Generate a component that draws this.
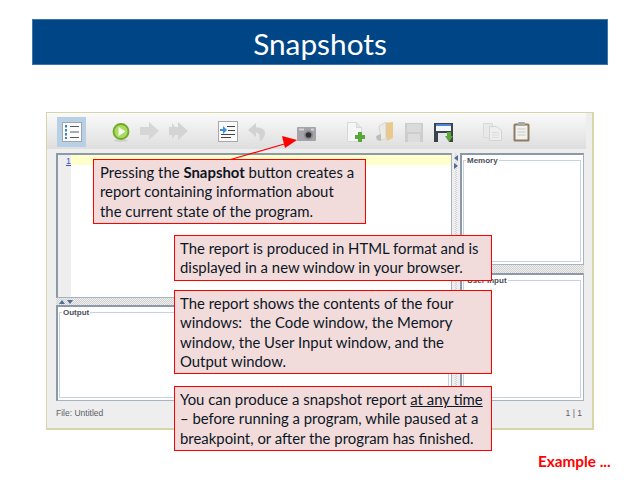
<div class="slide">
  <h1 class="title">Snapshots</h1>

  <div class="window">
    <div class="toolbar">
      <div class="tool active">
        <svg width="22" height="22" viewBox="0 0 22 22">
          <rect x="1.500" y="1.500" width="19" height="19" fill="#fbfbfb" stroke="#a2a6ac" />
          <path d="M5 4v14" stroke="#3b7fd4" stroke-width="2" stroke-dasharray="2.500 1.500" />
          <path d="M9 5.500h9M9 11h9M9 16.500h9" stroke="#5a5a5a" stroke-width="1.200" />
        </svg>
      </div>
      <svg class="play" width="18" height="19" viewBox="0 0 18 19">
        <ellipse cx="9" cy="17.500" rx="7" ry="1.500" fill="#d0d0d0" />
        <circle cx="9" cy="8.500" r="7.500" fill="#a9da62" stroke="#6fa926" stroke-width="1.800" />
        <path d="M6.500 4l7 4.500-7 4.500z" fill="#f6fbec" />
      </svg>
      <svg class="fwd" width="19" height="18" viewBox="0 0 19 18">
        <path d="M0 5h9V0l10 9-10 9v-5H0z" fill="#d6d6d6" />
      </svg>
      <svg class="fwd" width="19" height="18" viewBox="0 0 19 18">
        <path d="M0 5h3V1l6 8-6 8v-4H0zM9 0l10 9-10 9V13H6l3-4-3-4h3z" fill="#d4d4d4" />
      </svg>
      <svg class="indent" width="20" height="21" viewBox="0 0 20 21">
        <rect x=".5" y=".5" width="19" height="20" fill="#fafafa" stroke="#a8a8a8" />
        <path d="M9 5.500h8M10 9.500h7M3 13.500h14M3 16.500h10" stroke="#444" stroke-width="1.200" />
        <path d="M2 8h3V5l4 4-4 4v-3H2z" fill="#3f8fe0" />
      </svg>
      <svg class="undo" width="17" height="19" viewBox="0 0 17 19">
        <path d="M8 0L0 7l8 7V9.500c3 0 4.500 3 3.500 9.500 4-3 5.500-6 5.500-9 0-4-4-5.500-9-5.500z" fill="#d2d2d2" />
      </svg>
      <svg class="camera" width="19" height="14" viewBox="0 0 19 14">
        <rect width="19" height="14" rx="1" fill="#a4a4a8" />
        <rect x="2" y="1.500" width="5" height="2" fill="#d4d4d8" />
        <rect x="14" y="1.500" width="3" height="2" fill="#d4d4d8" />
        <circle cx="11.500" cy="8" r="4.500" fill="#8a8a8e" />
        <circle cx="11.500" cy="8" r="2.800" fill="#2f2f31" />
      </svg>
      <svg class="newfile" width="18" height="20" viewBox="0 0 18 20">
        <path d="M.5.500h9l5 5v14H.5z" fill="#f5f5f5" stroke="#d8d8d8" />
        <path d="M9.500.5v5h5" fill="#e4e4e4" stroke="#d8d8d8" />
        <path d="M11 10h4v3h3v4h-3v3h-4v-3H8v-4h3z" fill="#58a838" />
      </svg>
      <svg class="open" width="17" height="20" viewBox="0 0 17 20">
        <path d="M8 1l9-1v16l-6 3z" fill="#e9c98d" />
        <path d="M3 4l7-4v17l-5 1z" fill="#ecebe6" stroke="#c8c8c4" stroke-width=".6" />
        <path d="M0 14l5-2v7l-4-1z" fill="#bcbcbc" />
      </svg>
      <svg class="save-off" width="18" height="19" viewBox="0 0 18 19">
        <rect width="18" height="19" fill="#cdcdcd" />
        <rect x="2" y="1" width="14" height="8" fill="#dadada" />
        <rect x="3" y="11" width="12" height="8" fill="#dcdcdc" />
      </svg>
      <svg class="save" width="19" height="19" viewBox="0 0 19 19">
        <rect width="19" height="19" fill="#3c424a" />
        <rect x="2" y="1" width="15" height="7" fill="#f2f5fa" />
        <rect x="2" y="1" width="15" height="2" fill="#4a86d0" />
        <rect x="4" y="10" width="11" height="9" fill="#e2e5ea" />
        <path d="M13 9h4v4h2l-4 6-4-6h2z" fill="#5fa53a" />
      </svg>
      <svg class="copy" width="19" height="18" viewBox="0 0 19 18">
        <path d="M.5.500h9v14h-9z" fill="#e9e9e9" stroke="#dadada" />
        <path d="M6.500 3.500h7l5 4v10h-12z" fill="#eeeeee" stroke="#d4d4d4" />
        <path d="M9 9.500h7M9 12h7M9 14.500h7" stroke="#dcdcdc" />
      </svg>
      <svg class="paste" width="17" height="20" viewBox="0 0 17 20">
        <rect x=".5" y="1.500" width="16" height="18" rx="1.500" fill="#8f7a62" />
        <rect x="2.500" y="3.500" width="12" height="14" fill="#f1f1ee" />
        <rect x="5" y="0" width="7" height="4" rx="1" fill="#a8a8a4" />
        <path d="M4.500 7h8M4.500 10h8M4.500 13h8" stroke="#c9c9c5" />
      </svg>
    </div>

    <div class="workspace">
      <div class="left">
        <div class="code">
          <div class="gutter"><u>1</u></div>
          <div class="editor"><div class="current"></div></div>
        </div>
        <div class="split-h">
          <svg width="14" height="5" viewBox="0 0 14 5">
            <path d="M0 5l3-4 3 4zM8 1h6l-3 4z" fill="#4f6f94" />
          </svg>
        </div>
        <div class="pane output">
          <fieldset><legend>Output</legend></fieldset>
        </div>
      </div>
      <div class="split-v">
        <svg width="5" height="14" viewBox="0 0 5 14">
          <path d="M5 0v6L1 3zM1 8v6l4-3z" fill="#4f6f94" />
        </svg>
      </div>
      <div class="right">
        <div class="pane memory">
          <fieldset><legend>Memory</legend></fieldset>
        </div>
        <div class="split-h tall"></div>
        <div class="pane input">
          <fieldset><legend>User Input</legend></fieldset>
        </div>
      </div>
    </div>

    <div class="status">
      <span>File: Untitled</span>
      <span>1 | 1</span>
    </div>
  </div>

  <svg class="arrow" width="640" height="480" viewBox="0 0 640 480">
    <path d="M229 160L286 143.500" stroke="#f00" stroke-width="1.200" />
    <path d="M297 140L282 136l3 12z" fill="#f00" />
  </svg>

  <div class="note n1">
    Pressing the <b>Snapshot</b> button creates a<br />
    report containing information about<br />
    the current state of the program.
  </div>
  <div class="note n2">
    The report is produced in HTML format and is<br />
    displayed in a new window in your browser.
  </div>
  <div class="note n3">
    The report shows the contents of the four<br />
    windows:&nbsp; the Code window, the Memory<br />
    window, the User Input window, and the<br />
    Output window.
  </div>
  <div class="note n4">
    You can produce a snapshot report <u>at any time</u><br />
    – before running a program, while paused at a<br />
    breakpoint, or after the program has finished.
  </div>

  <div class="example">Example ...</div>
</div>

<style>
  :global(body) {
    margin: 0;
    background: #fff;
  }

  .slide {
    position: relative;
    width: 640px;
    height: 480px;
    overflow: hidden;
    padding-top: 19px;
    box-sizing: border-box;
    font-family: Lato, "Liberation Sans", sans-serif;
  }

  .title {
    margin: 0 32px;
    height: 46px;
    box-sizing: border-box;
    background: #004586;
    border: 1px solid #3f74ad;
    color: #fff;
    font-size: 29.800px;
    font-weight: 400;
    line-height: 47px;
    text-align: center;
  }

  .window {
    margin: 47px 46px 0;
    height: 318px;
    box-sizing: border-box;
    background: #eeeeee;
    border: 1px solid #d6d6a8;
    border-bottom-width: 2px;
    border-right-width: 2px;
    display: flex;
    flex-direction: column;
    font-family: "Liberation Sans", Arial, sans-serif;
  }

  .toolbar {
    height: 36px;
    width: 539px;
    flex: none;
    display: flex;
    align-items: center;
    padding-left: 10px;
    box-sizing: border-box;
    background: linear-gradient(#fafafa, #dedede);
  }

  .toolbar svg {
    flex: none;
  }

  .tool {
    width: 29px;
    height: 30px;
    margin-top: 2px;
    background: #b8d0e6;
    display: flex;
    align-items: center;
    justify-content: center;
  }

  .play { margin-left: 26px; margin-top: 2px; }
  .fwd { margin-left: 10px; margin-top: 0; }
  .indent { margin-left: 30px; }
  .undo { margin-left: 10px; margin-top: 3px; }
  .camera { margin-left: 32px; margin-top: 6px; }
  .newfile { margin-left: 31px; margin-top: 2px; }
  .open { margin-left: 11px; margin-top: 2px; }
  .save-off { margin-left: 12px; margin-top: 3px; }
  .save { margin-left: 11px; margin-top: 3px; }
  .copy { margin-left: 30px; margin-top: 2px; }
  .paste { margin-left: 11px; margin-top: 2px; }

  .workspace {
    margin: 4px 0 0 9px;
    height: 248px;
    flex: none;
    display: flex;
  }

  .left {
    width: 396px;
    display: flex;
    flex-direction: column;
  }

  .right {
    width: 124px;
    display: flex;
    flex-direction: column;
  }

  .split-v {
    width: 8px;
    padding: 2px 0 0 1px;
    box-sizing: border-box;
    background-color: #eeeeee;
    background-image: repeating-conic-gradient(#d2d2d2 0 25%, #eeeeee 0 50%);
    background-size: 2px 2px;
    background-position: center;
    background-repeat: repeat-y;
  }

  .split-v svg {
    display: block;
  }

  .split-h {
    height: 7px;
    flex: none;
    padding: 1px 0 0 3px;
    box-sizing: border-box;
    background-color: #eeeeee;
    background-image: repeating-conic-gradient(#d2d2d2 0 25%, #eeeeee 0 50%);
    background-size: 2px 2px;
  }

  .split-h svg {
    display: block;
  }

  .split-h.tall {
    height: 8px;
  }

  .code {
    height: 145px;
    flex: none;
    display: flex;
    box-sizing: border-box;
    border-top: 2px solid #8c9aa8;
    border-left: 2px solid #8c9aa8;
    border-right: 1px solid #a9b3bd;
    border-bottom: 1px solid #a9b3bd;
    background: #fff;
  }

  .gutter {
    width: 13px;
    box-sizing: border-box;
    background: #eeeeee;
    color: #3f4fd0;
    font-size: 9px;
    line-height: 12px;
    text-align: right;
  }

  .editor {
    flex: 1;
  }

  .current {
    height: 10px;
    background: #ffffcc;
  }

  .pane {
    flex: none;
    display: flex;
    box-sizing: border-box;
    padding: 1px 2px 2px 1px;
    background: #fff;
    border-top: 2px solid #8c9aa8;
    border-left: 2px solid #8c9aa8;
    border-right: 1px solid #a9b3bd;
    border-bottom: 1px solid #a9b3bd;
  }

  fieldset {
    flex: 1;
    margin: 0;
    min-width: 0;
    padding: 0;
    background: #fff;
    box-sizing: border-box;
    border: 1px solid #c4d2e2;
  }

  legend {
    margin-left: 2px;
    padding: 0 1px;
    color: #4a4f5c;
    font-size: 8px;
    font-weight: 700;
    line-height: 9px;
  }

  .output {
    height: 96px;
  }

  .memory {
    height: 112px;
  }

  .input {
    height: 128px;
  }

  .status {
    flex: 1;
    padding: 0 10px 4px 9px;
    display: flex;
    justify-content: space-between;
    align-items: center;
    color: #5c6068;
    font-size: 8.500px;
  }

  .arrow {
    position: absolute;
    top: 0;
    left: 0;
  }

  .note {
    position: absolute;
    box-sizing: border-box;
    padding: 3px 5px;
    background: #f2dcdb;
    border: 1px solid #f00;
    color: #0c1626;
    font-size: 14.900px;
    line-height: 19.400px;
    white-space: nowrap;
  }

  .n1 { left: 93px; top: 159px; width: 273px; height: 65px; padding-left: 6px; }
  .n2 { left: 174px; top: 235px; width: 318px; height: 46px; }
  .n3 { left: 174px; top: 290px; width: 318px; height: 84px; }
  .n4 { left: 174px; top: 386px; width: 318px; height: 65px; }

  .example {
    position: absolute;
    left: 538px;
    top: 452px;
    color: #f00;
    font-size: 15.300px;
    font-weight: 700;
  }
</style>
